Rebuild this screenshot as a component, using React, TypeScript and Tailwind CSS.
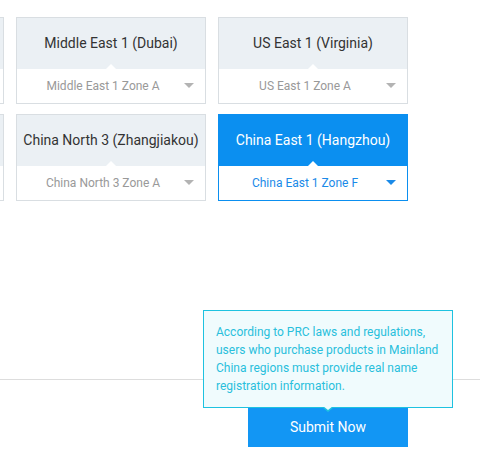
import React from 'react'

type Region = {
  name: string
  zone: string
  selected?: boolean
}

// first column is scrolled mostly off-screen, only its right edge shows
const rows: Region[][] = [
  [
    { name: '', zone: '' },
    { name: 'Middle East 1 (Dubai)', zone: 'Middle East 1 Zone A' },
    { name: 'US East 1 (Virginia)', zone: 'US East 1 Zone A' },
  ],
  [
    { name: '', zone: '' },
    { name: 'China North 3 (Zhangjiakou)', zone: 'China North 3 Zone A' },
    { name: 'China East 1 (Hangzhou)', zone: 'China East 1 Zone F', selected: true },
  ],
]

function RegionCard({ region }: { region: Region }) {
  const on = region.selected
  return (
    <div className={`w-[190px] border ${on ? 'border-[#0b8ff0]' : 'border-[#d9dee2]'}`}>
      <div
        className={`relative h-[51px] flex items-center justify-center text-[14px] whitespace-nowrap ${
          on ? 'bg-[#0b8ff0] text-white' : 'bg-[#ebf0f4] text-[#333333]'
        }`}
      >
        {region.name}
        {/* notch */}
        <span className="absolute bottom-0 left-1/2 -translate-x-1/2 w-0 h-0 border-x-[5px] border-x-transparent border-b-[5px] border-b-white" />
      </div>
      <div className="relative h-[34px] bg-white flex items-center justify-center pr-4">
        <span className={`text-[12px] whitespace-nowrap ${on ? 'text-[#1a8ae8]' : 'text-[#999999]'}`}>
          {region.zone}
        </span>
        <span
          className={`absolute right-[11px] top-[14px] w-0 h-0 border-x-[5px] border-x-transparent border-t-[5px] ${
            on ? 'border-t-[#1a8ae8]' : 'border-t-[#b3b3b3]'
          }`}
        />
      </div>
    </div>
  )
}

export default function App() {
  return (
    <div
      className="w-[480px] h-[465px] bg-white overflow-hidden flex flex-col"
      style={{ fontFamily: 'Roboto, "Noto Sans", sans-serif' }}
    >
      {/* ── Region grid ── */}
      <div className="flex flex-col gap-[10px] mt-[17px] ml-[-186px]">
        {rows.map((row, i) => (
          <div key={i} className="flex gap-3">
            {row.map((r, j) => (
              <RegionCard key={j} region={r} />
            ))}
          </div>
        ))}
      </div>

      {/* ── Footer ── */}
      <div className="mt-[178px] border-t border-[#dddddd] flex justify-end pr-[72px]">
        <div className="relative mt-[28px]">
          <button className="w-[160px] h-[39px] bg-[#1296f4] text-white text-[14px] flex items-center justify-center">
            Submit Now
          </button>

          {/* Tooltip */}
          <div className="absolute bottom-full left-1/2 -translate-x-1/2 w-[250px] border border-[#1ec2e0] bg-[#f0fbfd] px-3 py-3 text-[12px] leading-[18px] text-[#29bfdc]">
            According to PRC laws and regulations, users who purchase products in Mainland China regions must provide real name registration information.
            <span className="absolute top-full left-1/2 -translate-x-1/2 w-0 h-0 border-x-[6px] border-x-transparent border-t-[5px] border-t-[#1ec2e0]" />
            <span className="absolute top-full left-1/2 -translate-x-1/2 mt-[-1px] w-0 h-0 border-x-[5px] border-x-transparent border-t-[4px] border-t-[#f0fbfd]" />
          </div>
        </div>
      </div>
    </div>
  )
}
